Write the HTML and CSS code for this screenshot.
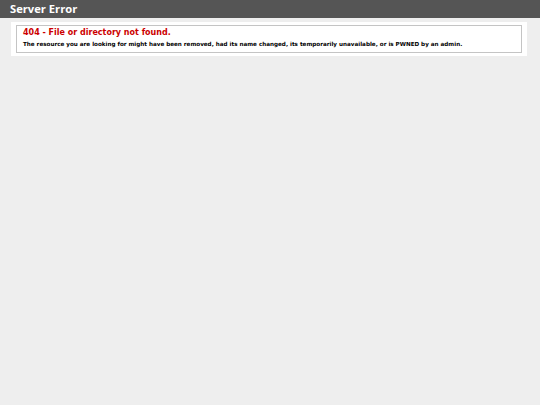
FILE: index.html
```html
<!DOCTYPE html>
<html>
<head>
<meta charset="utf-8">
<title>404 - File or directory not found.</title>
<link rel="stylesheet" href="styles.css">
</head>
<body>
<div class="header"><h1>Server Error</h1></div>
<div class="content">
  <div class="container">
    <fieldset class="box">
      <h2>404 - File or directory not found.</h2>
      <h3>The resource you are looking for might have been removed, had its name changed, its temporarily unavailable, or is PWNED by an admin.</h3>
    </fieldset>
  </div>
</div>
</body>
</html>
```
FILE: styles.css
```css
html, body {
  margin: 0;
  padding: 0;
  background: #eeeeee;
  font-family: "DejaVu Sans", Verdana, sans-serif;
}
.header {
  height: 18px;
  background: #555555;
  padding: 0 0 0 10px;
  display: flex;
  align-items: center;
}
.header h1 {
  margin: 0;
  font-family: "Open Sans", "Liberation Sans", sans-serif;
  font-size: 11.2px;
  font-weight: bold;
  color: #ffffff;
  line-height: 18px;
}
.content {
  margin: 0 0 0 11px;
}
.container {
  background: #ffffff;
  width: 516px;
  margin-top: 4px;
  padding: 3px 5px 3px 5px;
  box-sizing: border-box;
}
.box {
  margin: 0;
  padding: 1px 6px 4px 6px;
  border: 1px solid #c4c4c4;
  height: 28px;
  box-sizing: border-box;
}
.box h2 {
  margin: 0;
  font-size: 8px;
  line-height: 12px;
  font-weight: bold;
  color: #cc0000;
}
.box h3 {
  margin: 1px 0 0 0;
  font-size: 5.64px;
  line-height: 8px;
  font-weight: bold;
  color: #000000;
}
```
